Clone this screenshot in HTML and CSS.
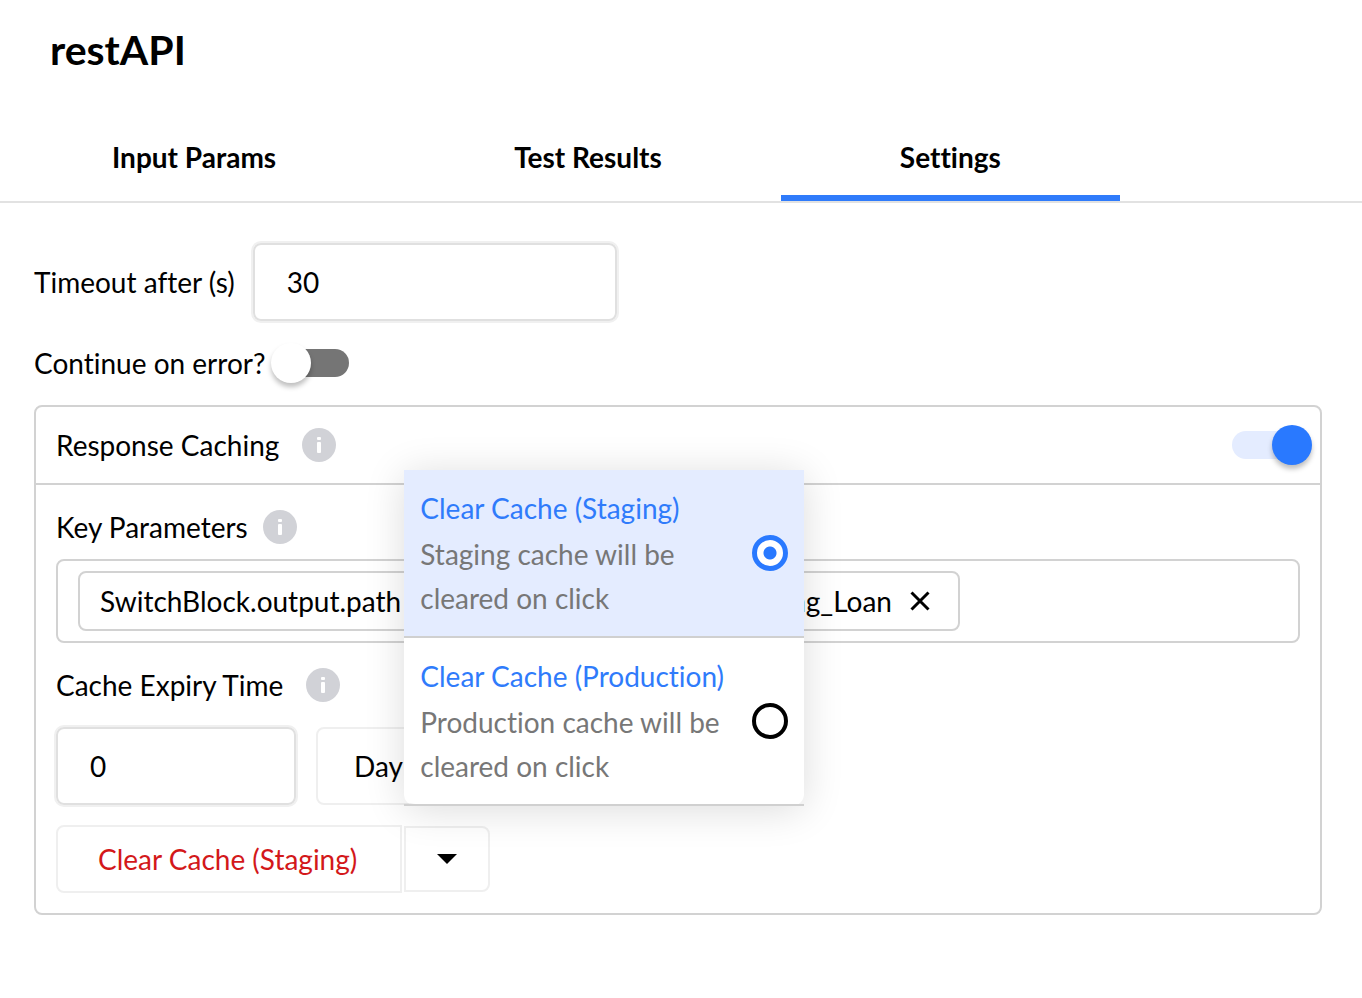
FILE: index.html
```html
<!DOCTYPE html>
<html lang="en">
<head>
  <meta charset="UTF-8" />
  <meta name="viewport" content="width=device-width, initial-scale=1" />
  <title>restAPI</title>
  <link rel="stylesheet" href="styles.css">
</head>
<body>
<svg class="sprite" aria-hidden="true">
  <symbol id="icon-info" viewBox="0 0 34 34">
    <circle cx="17" cy="17" r="17" fill="#d1d2d7" />
    <rect x="15" y="9" width="4" height="3" rx="1" fill="#fff" />
    <rect x="15" y="14" width="4" height="11" rx="1" fill="#fff" />
  </symbol>
</svg>

<h1>restAPI</h1>
<nav class="tabs">
  <button class="tab" type="button">Input Params</button>
  <button class="tab" type="button">Test Results</button>
  <button class="tab active" type="button">Settings</button>
</nav>

<main class="settings">
  <div class="timeoutRow">
    <label for="timeout">Timeout after (s)</label>
    <input id="timeout" class="textInput" type="text" value="30" />
  </div>
  <div class="errorRow">
    <label for="continue-on-error">Continue on error?</label>
    <input id="continue-on-error" class="toggle" type="checkbox" />
  </div>

  <section class="card">
    <div class="cardHeader">
      <label class="withInfo" for="caching">
        Response Caching
        <svg class="info"><use href="#icon-info" /></svg>
      </label>
      <input id="caching" class="toggle" type="checkbox" checked />
    </div>
    <div class="cardBody">
      <div class="field keyParams">
        <div class="withInfo">
          Key Parameters
          <svg class="info"><use href="#icon-info" /></svg>
        </div>
        <div class="tagBox">
          <div class="tag">
            <span>SwitchBlock.output.path</span>
            <span class="tagEnd">ng_Loan</span>
            <button class="tagRemove" type="button" aria-label="Remove">
              <svg viewBox="0 0 20 20"><path d="M1.500 1.500L18.500 18.500M18.500 1.500L1.500 18.500" /></svg>
            </button>
          </div>
        </div>
      </div>

      <div class="field">
        <label class="withInfo" for="expiry">
          Cache Expiry Time
          <svg class="info"><use href="#icon-info" /></svg>
        </label>
        <div class="expiryRow">
          <input id="expiry" class="textInput" type="text" value="0" />
          <select class="unit" aria-label="Unit">
            <option>Day</option>
          </select>
        </div>
      </div>

      <div class="splitButton">
        <button class="clearBtn" type="button">Clear Cache (Staging)</button>
        <div class="dropdown">
          <button class="arrowBtn" type="button" aria-label="Choose cache">
            <svg viewBox="0 0 20 10"><path d="M0 0h20L10 10z" /></svg>
          </button>
          <div class="menu">
            <div class="menuItem">
              <label class="selected">
                <span>
                  <span class="itemTitle">Clear Cache (Staging)</span>
                  <span class="itemText">Staging cache will be cleared on click</span>
                </span>
                <input type="radio" name="cache" checked />
              </label>
            </div>
            <div class="menuItem">
              <label>
                <span>
                  <span class="itemTitle">Clear Cache (Production)</span>
                  <span class="itemText">Production cache will be cleared on click</span>
                </span>
                <input type="radio" name="cache" />
              </label>
            </div>
          </div>
        </div>
      </div>
    </div>
  </section>
</main>
</body>
</html>
```
FILE: styles.css
```css
* { margin: 0; padding: 0; box-sizing: border-box; }
body {
  font-family: Lato, "Liberation Sans", sans-serif;
  font-size: 28px;
  line-height: 44px;
  font-weight: 400;
  font-variant-ligatures: none;
  background-color: #fff;
  color: #000;
}
button, input, select {
  font: inherit;
  font-variant-ligatures: inherit;
  color: inherit;
  background: none;
}
button, label, select { cursor: pointer; }
svg { display: block; }
.sprite {
  position: absolute;
  width: 0;
  height: 0;
}
h1 {
  padding: 20px 50px 40px;
  font-size: 41px;
  line-height: 60px;
  font-weight: 700;
}
.tabs {
  display: flex;
  border-bottom: 2px solid #e2e2e2;
}
.tab {
  padding: 15px 119px 16px;
  border: none;
  border-bottom: 6px solid transparent;
  font-weight: 700;
  white-space: nowrap;
}
.tab:first-child { padding-left: 112px; }
.tab.active { border-bottom-color: #2f7bfb; }
.settings { padding: 40px 40px 40px 34px; }
.timeoutRow {
  display: flex;
  align-items: center;
  gap: 18px;
}
.textInput {
  height: 78px;
  padding: 0 32px;
  border: 2px solid #e0e0e0;
  border-radius: 8px;
  box-shadow: 0 0 0 2px #f0f0f0;
  outline: none;
}
.timeoutRow .textInput { width: 364px; }
.errorRow {
  display: flex;
  align-items: center;
  gap: 11px;
  height: 84px;
}

/* switches */
.toggle {
  appearance: none;
  position: relative;
  width: 72px;
  height: 28px;
  border-radius: 14px;
  background-color: #757575;
  cursor: pointer;
}
.toggle::before {
  content: "";
  position: absolute;
  top: -6px;
  left: -6px;
  width: 40px;
  height: 40px;
  border-radius: 50%;
  background-color: #fff;
  box-shadow: 0 4px 5px rgba(0, 0, 0, 0.25);
}
.toggle:checked { background-color: #e4ecff; }
.toggle:checked::before {
  left: auto;
  right: -8px;
  background-color: #2979ff;
}

.card {
  border: 2px solid #d2d2d2;
  border-radius: 8px;
}
.cardHeader {
  display: flex;
  align-items: center;
  justify-content: space-between;
  height: 78px;
  padding: 0 16px 0 20px;
  border-bottom: 2px solid #d2d2d2;
}
.cardBody {
  display: flex;
  flex-direction: column;
  gap: 20px;
  padding: 20px;
}
.withInfo {
  display: flex;
  align-items: center;
  gap: 23px;
}
.info {
  width: 34px;
  height: 34px;
}
.field {
  display: flex;
  flex-direction: column;
  gap: 20px;
}
.keyParams { gap: 10px; }
.keyParams .withInfo { gap: 15px; }
.tagBox {
  padding: 10px 20px;
  border: 2px solid #d2d2d2;
  border-radius: 8px;
}
.tag {
  display: flex;
  align-items: center;
  width: 882px;
  max-width: 100%;
  height: 60px;
  padding: 0 28px 0 20px;
  border: 2px solid #d2d2d2;
  border-radius: 8px;
}
.tagEnd { margin-left: auto; }
.tagRemove {
  margin-left: 18px;
  border: none;
}
.tagRemove svg {
  width: 20px;
  height: 20px;
  fill: none;
  stroke: #000;
  stroke-width: 3;
}
.expiryRow {
  display: flex;
  gap: 20px;
}
.expiryRow .textInput { width: 240px; }
.unit {
  appearance: none;
  width: 240px;
  height: 78px;
  padding: 0 36px;
  border: 2px solid #efefef;
  border-radius: 8px;
}
.splitButton {
  display: flex;
  align-items: center;
  gap: 2px;
}
.clearBtn {
  height: 68px;
  padding: 0 43px 0 40px;
  border: 2px solid #efefef;
  border-radius: 8px 0 0 8px;
  color: #d3181a;
}
.dropdown { position: relative; }
.arrowBtn {
  display: flex;
  align-items: center;
  justify-content: center;
  width: 86px;
  height: 66px;
  border: 2px solid #efefef;
  border-radius: 0 8px 8px 0;
}
.arrowBtn svg {
  width: 20px;
  height: 10px;
}
.menu {
  position: absolute;
  left: 0;
  bottom: calc(100% + 20px);
  width: 400px;
  border-radius: 4px 4px 12px 12px;
  box-shadow: 0 4px 40px rgba(0, 0, 0, 0.14);
}
.menuItem { border-bottom: 2px solid #d0d0d0; }
.menuItem label {
  display: flex;
  align-items: center;
  justify-content: space-between;
  gap: 16px;
  padding: 16px;
  background-color: #fff;
}
.menuItem:last-child label { border-radius: 0 0 12px 12px; }
.menuItem label.selected { background-color: #e4ecff; }
.itemTitle, .itemText { display: block; }
.itemTitle {
  margin-bottom: 2px;
  color: #2f7bfb;
}
.itemText { color: #777; }
.menu input {
  appearance: none;
  flex: none;
  width: 36px;
  height: 36px;
  border: 4px solid #000;
  border-radius: 50%;
  background-color: #fff;
}
.menu input:checked {
  border-width: 5px;
  border-color: #2979ff;
  background: radial-gradient(circle, #2979ff 6px, #fff 7px);
}
```
